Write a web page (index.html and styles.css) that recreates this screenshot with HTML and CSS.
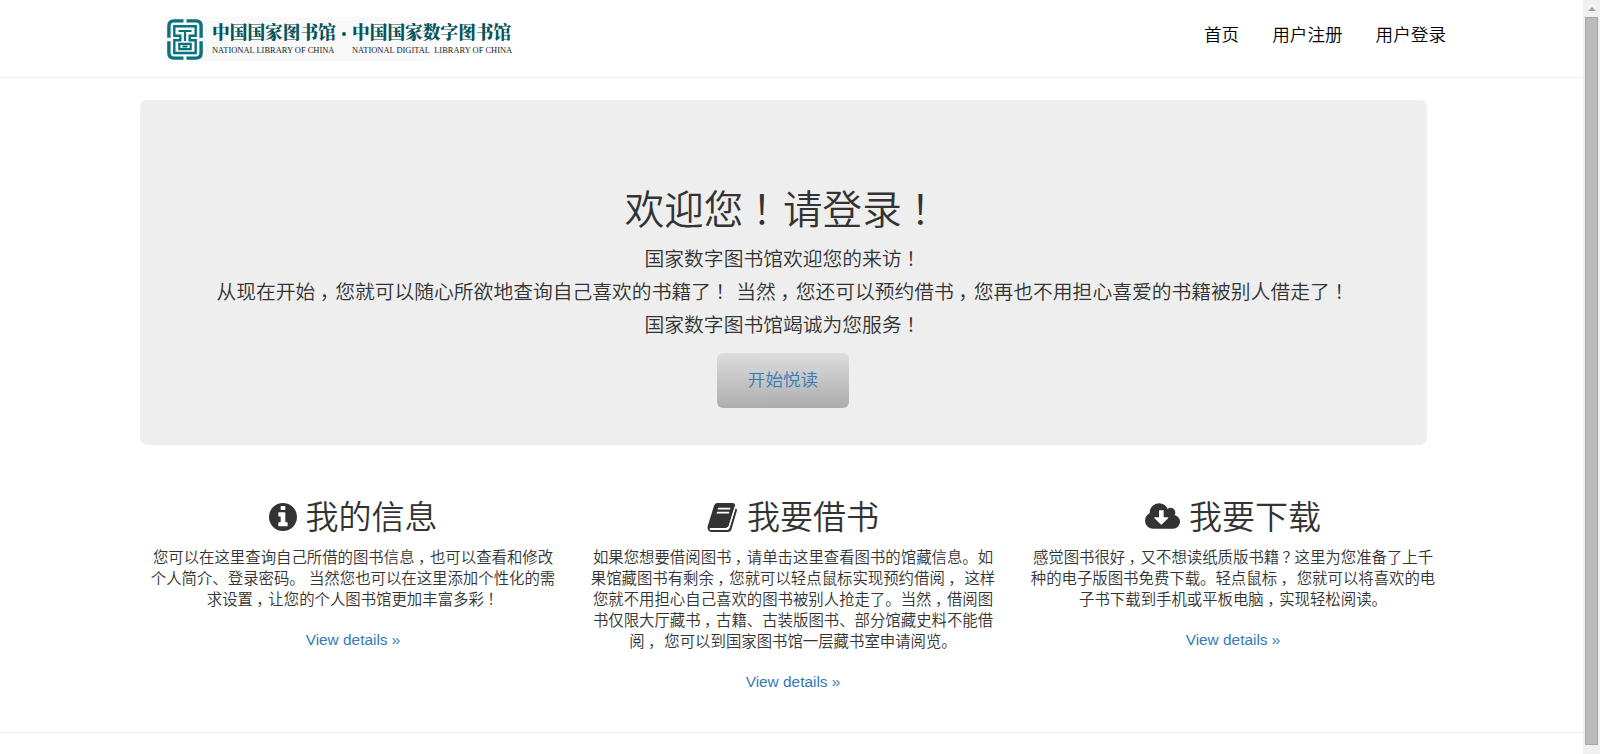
FILE: index.html
```
<!DOCTYPE html>
<html lang="zh-CN">
<head>
<meta charset="utf-8">
<title>中国国家数字图书馆</title>
<link rel="stylesheet" href="styles.css">
</head>
<body>
<div class="page">
  <header class="header">
    <a class="brand">
      <svg class="brand-mark" viewBox="0 0 36 41" fill="none" stroke="#08727f">
        <path stroke-width="3.4" d="M16.500 1.900H7Q1.900 1.900 1.900 7v11.800M19.500 1.900H29q5.100 0 5.100 5.100v11.800M1.900 22.200V34q0 5.100 5.100 5.100h9.500M34.100 22.200V34q0 5.100-5.100 5.100h-9.500"/>
        <path stroke-width="2.400" d="M7.300 7.300h21.400v9.500h-6v4.500h6v12.700H7.300V21.300h6v-4.500h-6z"/>
        <path stroke-width="2.200" d="M11.500 12h13M18 12v10M12.300 30.200v-5.400h11.400v5.400zM15.500 27.500h5"/>
      </svg>
      <span class="brand-text">
        <span class="brand-col brand-library"><b>中国国家图书馆</b><small>NATIONAL LIBRARY OF CHINA</small></span>
        <i class="brand-dot"></i>
        <span class="brand-col brand-digital"><b>中国国家数字图书馆</b><small>NATIONAL DIGITAL&nbsp; LIBRARY OF CHINA</small></span>
      </span>
    </a>
    <nav class="nav"><a>首页</a><a>用户注册</a><a>用户登录</a></nav>
  </header>

  <section class="hero">
    <h1>欢迎您<i class="pm">！</i>请登录<i class="pm">！</i></h1>
    <p>国家数字图书馆欢迎您的来访<i class="pm">！</i><br>从现在开始<i class="pm">，</i>您就可以随心所欲地查询自己喜欢的书籍了<i class="pm">！</i> 当然<i class="pm">，</i>您还可以预约借书<i class="pm">，</i>您再也不用担心喜爱的书籍被别人借走了<i class="pm">！</i><br>国家数字图书馆竭诚为您服务<i class="pm">！</i></p>
    <a class="button">开始悦读</a>
  </section>

  <main class="features">
    <article class="feature">
      <h2><svg class="icon-info" viewBox="0 0 1536 1536"><path fill="currentColor" fill-rule="evenodd" d="M768 0a768 768 0 1 1 0 1536A768 768 0 0 1 768 0zM1024 1248v-160q0-14-9-23t-23-9h-96V544q0-14-9-23t-23-9H544q-14 0-23 9t-9 23v160q0 14 9 23t23 9h96v320h-96q-14 0-23 9t-9 23v160q0 14 9 23t23 9h448q14 0 23-9t9-23zM896 352V192q0-14-9-23t-23-9H672q-14 0-23 9t-9 23v160q0 14 9 23t23 9h192q14 0 23-9t9-23z"/></svg><span>我的信息</span></h2>
      <p>您可以在这里查询自己所借的图书信息<i class="pm">，</i>也可以查看和修改<br>个人简介、登录密码。 当然您也可以在这里添加个性化的需<br>求设置<i class="pm">，</i>让您的个人图书馆更加丰富多彩<i class="pm">！</i></p>
      <a class="details">View details »</a>
    </article>
    <article class="feature">
      <h2><svg class="icon-book" viewBox="0 0 30 29"><path fill="currentColor" fill-rule="evenodd" d="M9.500 0H25q3.300 0 2.400 3.200L21.500 22.500q-.8 2.400-3.500 2.400H3.200q-1.500 0-1 1.300.3.900 1.800.9h15.500q1.700 0 2.200-1.500L28 5.200q1.900.8 1.300 2.800L24 26.300Q23.200 29 20.300 29H4.500Q.5 29 0 25q-.1-1.400.8-3.800L6.400 3Q7.300 0 9.500 0zM10.600 4.700 10.100 6.500H22.500L23 4.700zM9.500 8.700 9 10.500H21.400L21.900 8.700z"/><path fill="none" stroke="#fff" stroke-width="1.400" d="M27.500 4.500 21.800 23.500q-.8 2.300-3.500 2.300H2.500"/></svg><span>我要借书</span></h2>
      <p>如果您想要借阅图书<i class="pm">，</i>请单击这里查看图书的馆藏信息。如<br>果馆藏图书有剩余<i class="pm">，</i>您就可以轻点鼠标实现预约借阅<i class="pm">，</i> 这样<br>您就不用担心自己喜欢的图书被别人抢走了。当然<i class="pm">，</i>借阅图<br>书仅限大厅藏书<i class="pm">，</i>古籍、古装版图书、部分馆藏史料不能借<br>阅<i class="pm">，</i> 您可以到国家图书馆一层藏书室申请阅览。</p>
      <a class="details">View details »</a>
    </article>
    <article class="feature">
      <h2><svg class="icon-cloud" viewBox="0 0 1920 1408"><path fill="currentColor" fill-rule="evenodd" d="M448 1408Q263 1408 131.500 1276.500T0 960q0-132 71-241.500T258 555q-2-28-2-43 0-212 150-362T768 0q158 0 286.500 88T1242 318q70-62 166-62 106 0 181 75t75 181q0 75-41 138 129 30 213 134.500t84 239.500q0 159-112.500 271.500T1536 1408zM1280 800q0-14-9-23t-23-9h-224V416q0-13-9.500-22.500T992 384H800q-13 0-22.500 9.500T768 416v352H544q-13 0-22.500 9.500T512 800q0 14 9 23l352 352q9 9 23 9t23-9l351-351q10-12 10-24z"/></svg><span>我要下载</span></h2>
      <p>感觉图书很好<i class="pm">，</i>又不想读纸质版书籍<i class="pm">？</i>这里为您准备了上千<br>种的电子版图书免费下载。轻点鼠标<i class="pm">，</i> 您就可以将喜欢的电<br>子书下载到手机或平板电脑<i class="pm">，</i>实现轻松阅读。</p>
      <a class="details">View details »</a>
    </article>
  </main>
  <footer class="footer"></footer>
</div>
<aside class="scrollbar"><span class="scroll-up"></span><span class="scroll-thumb"></span></aside>
</body>
</html>
```
FILE: styles.css
```
* { box-sizing: border-box; }
body {
  margin: 0;
  height: 754px;
  display: flex;
  overflow: hidden;
  background: #fff;
  color: #333;
  font-family: "Liberation Sans", "Noto Sans CJK SC", sans-serif;
  font-size: 15.4px;
  font-weight: 350;
  line-height: 21px;
}
.page { width: 1583px; height: 754px; }
h1, h2, p { margin: 0; font-weight: 350; white-space: nowrap; }
/* full-width punctuation centred in its cell */
.pm { font-style: normal; padding-left: .22em; margin-right: -.22em; }

.header {
  height: 78px;
  border-bottom: 1px solid #eee;
  display: flex;
  justify-content: space-between;
  padding: 17px 137px 0 165px;
}
.brand {
  display: flex;
  width: 349px;
  height: 44px;
  padding: 2px 0 0 2px;
  background: linear-gradient(90deg, #f9f9f9 0, #f9f9f9 70%, #fff 85%);
}
.brand-mark { width: 36px; height: 41px; flex: none; }
.brand-text { display: flex; margin-left: 9px; }
.brand-col { display: flex; flex-direction: column; white-space: nowrap; }
.brand-col b {
  font: 900 17.7px/25px "Noto Serif CJK SC", "Noto Sans CJK SC", serif;
  color: #07545b;
}
.brand-col small {
  font: 8.450px/12px "Liberation Serif", serif;
  color: #222;
}
.brand-library { width: 124px; }
.brand-digital { width: 161px; }
.brand-dot { width: 4px; height: 4px; border-radius: 2px; background: #07545b; margin: 13px 6px 0 6px; }
.nav { display: flex; gap: 33px; font-size: 17.6px; line-height: 36px; color: #000; }

.hero {
  width: 1287px;
  height: 345px;
  margin: 22px 0 0 140px;
  padding: 86px 1px 0 0;
  border-radius: 7px;
  background: #eee;
  display: flex;
  flex-direction: column;
  align-items: center;
}
.hero h1 { font-size: 39.6px; line-height: 48px; }
.hero p { font-size: 19.8px; line-height: 33px; margin-top: 9px; text-align: center; }
.button {
  width: 132px;
  height: 55px;
  margin-top: 11px;
  border-radius: 6px;
  background: linear-gradient(#ddd, #adadad);
  color: #337ab7;
  font-size: 17.6px;
  line-height: 54px;
  text-align: center;
}

.features { display: grid; grid-template-columns: repeat(3, 440px); margin-left: 133px; height: 287px; padding-top: 54px; }
.feature { text-align: center; }
.feature h2 { display: flex; justify-content: center; align-items: flex-start; gap: 9px; font-size: 33px; line-height: 38px; height: 48px; }
.feature svg { display: block; margin-top: 4px; }
.feature p { line-height: 21px; }
.icon-info { width: 28px; height: 28px; }
.icon-book { width: 31px; height: 29px; }
.icon-cloud { width: 35px; height: 26px; }
.details { display: block; margin-top: 19px; color: #337ab7; }
.footer { border-top: 1px solid #eee; }

.scrollbar { width: 17px; height: 754px; background: #f0f0f0; display: flex; flex-direction: column; align-items: center; }
.scroll-up { border: 4px solid transparent; border-top: 0; border-bottom-color: #a0a0a0; margin: 7px 0 6px; }
.scroll-thumb { width: 13px; height: 728px; background: #bbb; border: 1px solid #a6a6a6; }
```
